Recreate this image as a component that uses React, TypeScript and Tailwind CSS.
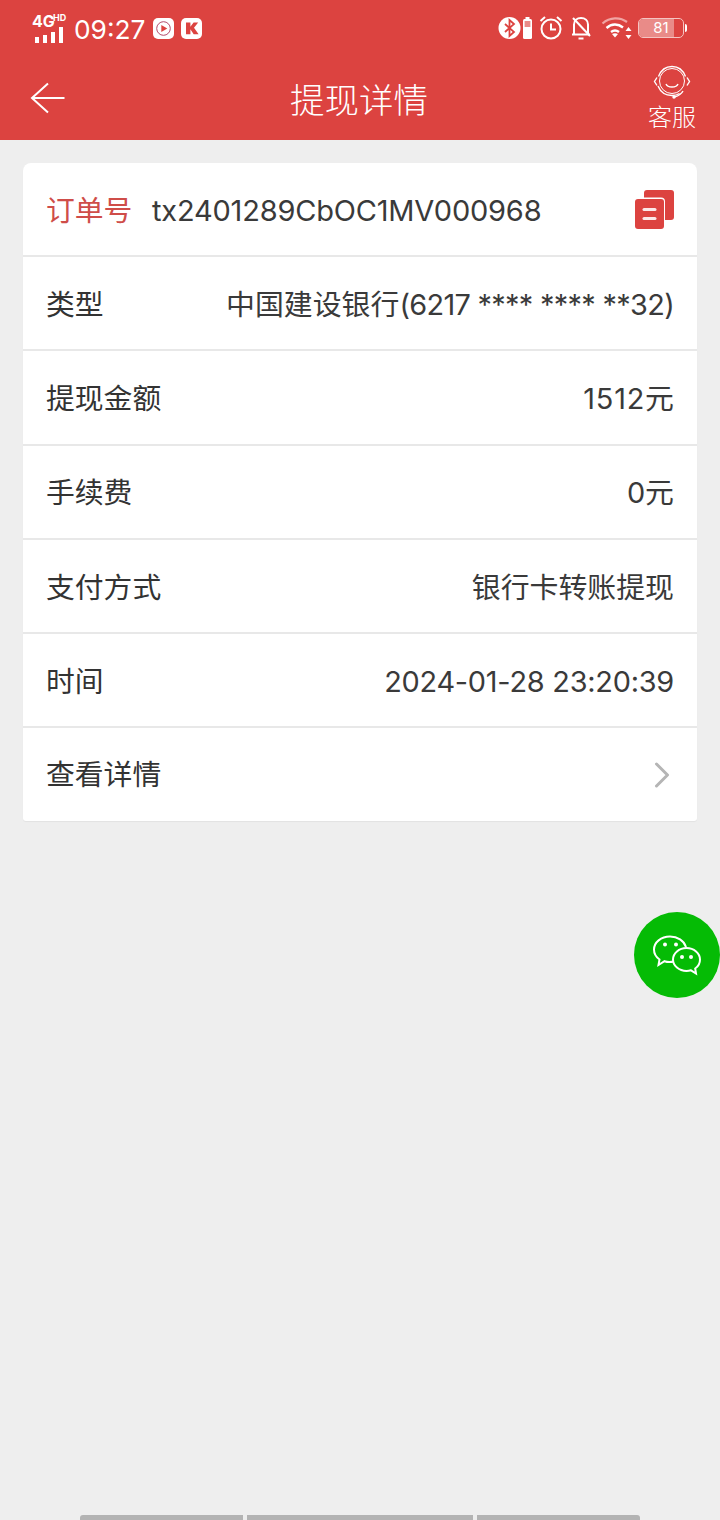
import { ChevronRight } from "lucide-react";

const FONT = "font-['Inter','Noto_Sans_CJK_SC',sans-serif]";

const ROWS = [
  { label: "类型", value: <>中国建设银行<span className="tracking-[-0.7px]">(6217 **** **** **32)</span></> },
  { label: "提现金额", value: <><span className="tracking-[0.8px]">1512</span>元</> },
  { label: "手续费", value: "0元" },
  { label: "支付方式", value: "银行卡转账提现" },
  { label: "时间", value: <span className="tracking-[-0.25px]">2024-01-28 23:20:39</span> },
];

function Signal() {
  return (
    <div className="relative w-[34px] h-[26px] shrink-0">
      <span className="absolute left-0 top-[-3px] text-[16px] leading-[18px] font-bold text-white">4G</span>
      <span className="absolute left-[21px] top-[-2px] text-[9px] leading-[10px] font-bold text-white">HD</span>
      <svg className="absolute left-[2px] top-[11px]" width="30" height="28" viewBox="0 0 30 28" fill="#fff">
        <rect x="1" y="11" width="4" height="6" />
        <rect x="9" y="9" width="4" height="8" />
        <rect x="17" y="6" width="4" height="11" />
        <rect x="25" y="1" width="4" height="16" />
      </svg>
    </div>
  );
}

function PlayApp() {
  return (
    <svg width="21" height="21" viewBox="0 0 21 21">
      <rect width="21" height="21" rx="5" fill="#fff" />
      <circle cx="10.5" cy="10.5" r="6.8" fill="none" stroke="#b34a6a" strokeWidth="1" />
      <path d="M8.3 7l6 3.5-6 3.5z" fill="#dc4340" />
    </svg>
  );
}

function KApp() {
  return (
    <svg width="21" height="21" viewBox="0 0 21 21">
      <rect width="21" height="21" rx="5" fill="#fff" />
      <path d="M5 4.5h4.4v4.2l3.2-4.2h4.6l-4.2 5.3 4.6 6.4h-4.9l-3.3-5v5H5z" fill="#dc4340" />
    </svg>
  );
}

function StatusIcons() {
  return (
    <div className="flex items-center">
      <svg width="23" height="24" viewBox="0 0 23 24">
        <circle cx="11.5" cy="12" r="11" fill="#fff" />
        <path d="M7 8l9 8-4.5 4V4l4.5 4-9 8" fill="none" stroke="#dc4340" strokeWidth="1.8" />
      </svg>
      <svg width="11" height="24" viewBox="0 0 11 24" className="ml-[1px]">
        <rect x="3.5" y="1" width="4" height="2" fill="#fff" />
        <rect x="1" y="3" width="9" height="20" rx="1.5" fill="#fff" />
        <rect x="2.6" y="5" width="5.8" height="6" fill="#e98b88" />
      </svg>
      <svg width="24" height="26" viewBox="0 0 24 26" className="ml-[6px]" fill="none" stroke="#fff" strokeWidth="2">
        <circle cx="12" cy="14" r="9.5" />
        <path d="M12 8.5V14.5H17" />
        <path d="M1.5 6L6 2M22.5 6L18 2" />
      </svg>
      <svg width="22" height="26" viewBox="0 0 22 26" className="ml-[7px]" fill="none" stroke="#fff" strokeWidth="2">
        <path d="M4 19V9.5C4 5.5 7 3 11 3s7 2.5 7 6.5V19M2 19.5h18" />
        <path d="M8.5 23.5h5" />
        <path d="M3 3l17 18" />
      </svg>
      <svg width="32" height="24" viewBox="0 0 32 24" className="ml-[9px]" fill="none">
        <path d="M1.5 7.5C9 1 19 1 26 6" stroke="#f0a5a3" strokeWidth="2.2" />
        <path d="M5.5 12C10.500 7.500 17 7.500 22 11.500" stroke="#fff" strokeWidth="2.4" />
        <path d="M10 16C12.500 14 15.500 14 18 16" stroke="#fff" strokeWidth="2.4" />
        <path d="M14 21.500l-3-3.500q3-1.500 6 0z" fill="#fff" />
        <path d="M27.500 11l3 4h-6zM27.500 23l3-4h-6z" fill="#fff" />
      </svg>
      <div className="ml-[5px] flex items-center">
        <div className="relative flex h-[20px] w-[46px] items-center overflow-hidden rounded-[5px] border border-[#f5c4c2]">
          <div className="h-full w-[35px] bg-[#e98b88]" />
          <span className="absolute inset-0 text-center text-[15px] leading-[18px] text-white">81</span>
        </div>
        <div className="ml-[1px] h-[8px] w-[2px] rounded-r-sm bg-white" />
      </div>
    </div>
  );
}

function Header() {
  return (
    <header className="h-[140px] shrink-0 bg-[#dc4340] text-white">
      <div className="flex h-[56px] items-center justify-between pl-[32px] pr-[33px]">
        <div className="flex items-center">
          <Signal />
          <span className="ml-[8px] pt-[4px] text-[26.300px] leading-[32px] text-white">09:27</span>
          <div className="ml-[8px] flex gap-[7px]">
            <PlayApp />
            <KApp />
          </div>
        </div>
        <StatusIcons />
      </div>
      <div className="flex h-[84px] items-center justify-between pl-[30px] pr-[24px]">
        <svg width="36" height="32" viewBox="0 0 36 32" fill="none" stroke="#fff" strokeWidth="2" className="mb-[1px]">
          <path d="M34.500 16H2M18 1.500L2 16l16 14.500" />
        </svg>
        <h1 className="ml-[4px] mt-[6px] text-[34.500px] font-light leading-[40px] text-white">提现详情</h1>
        <div className="flex flex-col items-center pt-[3px]">
          <svg width="40" height="38" viewBox="0 0 40 38" fill="none" stroke="#fff" strokeWidth="1.4" className="mt-[-2px]">
            <path d="M6.500 12.500C9 6 14 2.500 20 2.500S31 6 33.500 12.500" />
            <path d="M6 22c2.500 6 7.500 9.500 14 9.500 3 0 5.500-.7 7.500-2" />
            <circle cx="20" cy="17" r="12.500" strokeWidth="1" />
            <path d="M14 20c1.500 4 10.500 4 12 0" />
            <path d="M5 13.500l-2.500 4 2.500 4M35 13.500l2.500 4-2.500 4" />
            <path d="M31 27c-2 4-5 5-8.500 6" />
            <circle cx="22" cy="33" r="1" fill="#fff" />
          </svg>
          <span className="text-[24px] font-light leading-[32px] text-white">客服</span>
        </div>
      </div>
    </header>
  );
}

function CopyIcon() {
  return (
    <svg width="40" height="40" viewBox="0 0 40 40" className="mt-[2px]">
      <rect x="10" width="30" height="30" rx="3" fill="#dc4340" />
      <rect x="-1" y="7.500" width="32" height="33" rx="4" fill="#ffffff" />
      <rect x="1" y="9" width="29" height="30" rx="3" fill="#dc4340" />
      <rect x="8.500" y="18" width="14" height="3" rx="1.500" fill="#fbe9e9" />
      <rect x="8.500" y="27" width="14" height="3" rx="1.500" fill="#fbe9e9" />
    </svg>
  );
}

export default function App() {
  return (
    <div className={`relative flex h-[1520px] w-[720px] flex-col overflow-hidden bg-[#eeeeee] ${FONT}`}>
      <Header />

      <main className="mx-[23px] mt-[23px] overflow-hidden rounded-t-[8px] rounded-b-[3px] bg-white text-[#333333] shadow-[0_1px_1px_rgba(0,0,0,0.05)]">
        <div className="flex h-[92px] items-center justify-between pl-[23px] pr-[23px]">
          <div className="flex items-center pt-[4px]">
            <span className="w-[106px] text-[28.800px] text-[#cf4d49]">订单号</span>
            <span className="text-[29px] leading-[36px] tracking-[-0.2px] text-[#3a3a3a]">tx2401289CbOC1MV000968</span>
          </div>
          <CopyIcon />
        </div>
        {ROWS.map((row) => (
          <div key={row.label} className="flex h-[94.300px] items-center justify-between border-t-2 border-[#e8e8e8] pl-[23px] pr-[23px] pt-[3px]">
            <span className="text-[28.800px] leading-[36px]">{row.label}</span>
            <span className="text-[28.900px] leading-[36px] text-[#3a3a3a]">{row.value}</span>
          </div>
        ))}
        <div className="flex h-[94.300px] items-center justify-between border-t-2 border-[#e8e8e8] pl-[23px] pr-[13px] pt-[1px]">
          <span className="text-[28.800px] leading-[36px]">查看详情</span>
          <ChevronRight size={44} strokeWidth={3} className="text-[#b5b5b5]" absoluteStrokeWidth />
        </div>
      </main>

      {/* wechat floating button */}
      <div className="absolute left-[634px] top-[912px] flex h-[86px] w-[86px] items-center justify-center rounded-full bg-[#05bb05]">
        <svg width="48" height="42" viewBox="0 0 48 42" fill="none" stroke="#fff" strokeWidth="2">
          <path d="M21 27.500c-1.500.3-3 .5-4.500.5-2 0-3.500-.3-5-.8L5.500 31l1-5.500C3 23 1 19.500 1 15.500 1 8.500 8 2.500 17 2.500c7.500 0 14 4 16 10.500" />
          <path d="M47 25.500c0-6.300-6-11.500-13.500-11.500S20 19.200 20 25.500 26 37 33.500 37c1.500 0 3-.2 4.500-.7l5 3.200-.8-5c3-2 4.800-5 4.800-9z" />
          <circle cx="12" cy="10.500" r="2" fill="#fff" stroke="none" />
          <circle cx="23" cy="10.500" r="2" fill="#fff" stroke="none" />
          <circle cx="29" cy="23" r="2" fill="#fff" stroke="none" />
          <circle cx="38" cy="23" r="2" fill="#fff" stroke="none" />
        </svg>
      </div>

      {/* bottom gesture bar */}
      <div className="mt-auto ml-[80px] flex h-[5px] w-[560px] gap-[4px]">
        <div className="w-[163px] rounded-tl-[3px] bg-[#b3b3b3]" />
        <div className="w-[226px] bg-[#b3b3b3]" />
        <div className="flex-1 rounded-tr-[3px] bg-[#b3b3b3]" />
      </div>
    </div>
  );
}
